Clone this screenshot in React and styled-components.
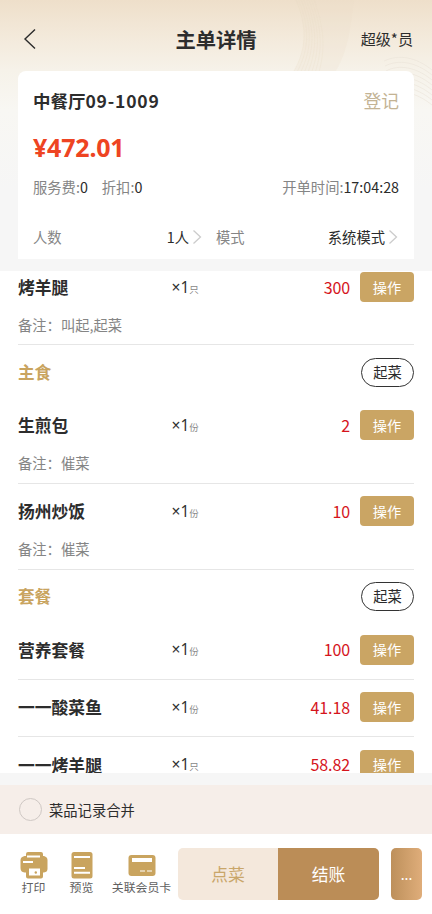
import React from "react";
import styled, { createGlobalStyle, css } from "styled-components";

const Global = createGlobalStyle`
  * { box-sizing: border-box; }
  body { margin: 0; background: #f6f6f6; }
  button { font-family: inherit; padding: 0; border: 0; cursor: pointer; }
`;

const Screen = styled.div`
  position: relative;
  width: 432px;
  height: 914px;
  overflow: hidden;
  display: flex;
  flex-direction: column;
  background: linear-gradient(180deg, #eedfca 0, #f3e9da 35px, #f6f2e9 70px, #f8f7f3 110px, #f6f6f6 190px);
  color: #2d2d2d;
  font-family: "Noto Sans CJK SC", "Noto Sans", sans-serif;
  white-space: nowrap;
`;

const Ripples = styled.svg`
  position: absolute;
  top: 0;
  right: 0;
`;

const Header = styled.header`
  position: relative;
  flex: none;
  height: 71px;
  padding: 6px 19px 0 23px;
  display: grid;
  grid-template-columns: 1fr auto 1fr;
  align-items: center;
  font-size: 15px;
`;

const Title = styled.h1`
  margin: 0 4px 0 0;
  font-size: 20.3px;
  line-height: 30px;
  font-weight: 700;
`;

const User = styled.span`
  justify-self: end;
  margin-top: -2px;
  font-size: 15.1px;
`;

const Card = styled.section`
  position: relative;
  flex: none;
  height: 188px;
  margin: 0 18px 12px;
  padding: 14px 15px 0;
  border-radius: 8px 8px 0 0;
  background: #fff;
`;

const CardRow = styled.div`
  display: flex;
  align-items: center;
  height: ${(p) => p.$h}px;
  font-size: 14.3px;
`;

const TableName = styled.strong`
  flex: 1;
  font-size: 17.5px;
  span { letter-spacing: 0.8px; }
`;

const Register = styled.span`
  color: #c3b394;
  font-size: 17.8px;
`;

const Total = styled.strong`
  color: #ee4422;
  font-family: "Noto Sans", "Noto Sans CJK SC", sans-serif;
  font-size: 25px;
  letter-spacing: -0.2px;
`;

const Field = styled.span`
  color: #858585;
  margin-right: ${(p) => p.$gap || 0}px;
  margin-left: ${(p) => (p.$end ? "auto" : 0)};
  b { font-weight: 400; color: #2b2b2b; }
`;

const Choice = styled.div`
  display: flex;
  align-items: center;
  width: ${(p) => p.$w}px;
  padding-right: ${(p) => p.$pad || 0}px;
  color: #858585;
  b { margin-left: auto; font-weight: 400; color: #2b2b2b; }
  svg { flex: none; margin: 0 1px 0 3px; }
`;

const List = styled.main`
  position: relative;
  flex: none;
  height: 502px;
  overflow: hidden;
  padding: 0 18px;
  background: #fff;
`;

const Scrolled = styled.div`
  margin-top: -11.4px;
`;

const Category = styled.div`
  display: flex;
  justify-content: space-between;
  align-items: center;
  height: 52.6px;
  padding-top: 1px;
  color: #c9a45f;
  font-size: 16.6px;
  font-weight: 700;
`;

const Pill = styled.button`
  width: 53px;
  height: 29px;
  border: 1.5px solid #333;
  border-radius: 15px;
  background: #fff;
  color: #2b2b2b;
  font-size: 14.3px;
  line-height: 26px;
`;

const Item = styled.article`
  height: ${(p) => (p.$note ? 85.8 : 57.6)}px;
  padding-top: 12.4px;
  border-bottom: 1px solid #e6e6e6;
`;

const ItemRow = styled.div`
  display: grid;
  grid-template-columns: 153.5px 1fr auto 54px;
  align-items: center;
  height: 30px;
`;

const Dish = styled.strong`
  font-size: 16.8px;
`;

const Count = styled.span`
  padding-top: 2px;
  font-family: "Noto Sans", "Noto Sans CJK SC", sans-serif;
  font-size: 15.6px;
  line-height: 24px;
  color: #333;
  small { font-size: 9.5px; color: #888; }
`;

const Price = styled.span`
  margin: -1px 10px 0 0;
  color: #d5141c;
  font-size: 16px;
  letter-spacing: -0.1px;
`;

const Action = styled.button`
  height: 30px;
  border-radius: 4px;
  background: #caa564;
  color: #fff;
  font-size: 14.2px;
  line-height: 29px;
`;

const Note = styled.p`
  margin: 12px 0 0;
  color: #858585;
  font-size: 14.3px;
  line-height: 21px;
`;

const MergeBar = styled.label`
  flex: none;
  display: flex;
  align-items: center;
  gap: 7px;
  height: 49px;
  margin-top: 12px;
  padding-left: 19px;
  background: #f6eee9;
  font-size: 14.3px;
`;

const Radio = styled.i`
  width: 23px;
  height: 23px;
  border: 1px solid #cfc8c4;
  border-radius: 50%;
`;

const Footer = styled.footer`
  flex: 1;
  display: flex;
  align-items: flex-start;
  padding: 14px 10px 0 15px;
  background: #fff;
`;

const Tool = styled.div`
  flex: none;
  display: flex;
  flex-direction: column;
  align-items: center;
  width: ${(p) => p.$w}px;
  padding-top: 3px;
  color: #606060;
  font-size: 11.9px;
  line-height: 15px;
  svg { display: block; }
`;

const BigButton = styled.button`
  flex: none;
  height: 52px;
  font-size: 16.8px;
  line-height: 51px;
  ${(p) =>
    p.$primary
      ? css`
          width: 101px;
          border-radius: 0 5px 5px 0;
          background: #bb8d57;
          color: #fff;
        `
      : css`
          width: 100px;
          margin-left: 6px;
          border-radius: 5px 0 0 5px;
          background: #f4e8dc;
          color: #c9a66a;
        `}
`;

const More = styled.button`
  flex: none;
  width: 31px;
  height: 52px;
  margin-left: 12px;
  border-radius: 5px;
  background: linear-gradient(90deg, #bd905b, #dfad7a);
  color: #fff;
  font-size: 14px;
`;

const Chevron = () => (
  <svg width="10" height="16" viewBox="0 0 10 16" fill="none" stroke="#ccc" strokeWidth="1.3">
    <path d="M1.5 1.5 8.5 8l-7 6.5" />
  </svg>
);

const PrintIcon = () => (
  <svg width="28" height="28" viewBox="0 0 28 28">
    <path fill="#c9a45f" d="M8 1h13q2 0 2 2v2h1q3.500 1 3.500 4v9q0 3-3.500 3.500h-1v4q0 2-2 2H8q-2 0-2-2v-4H4.500Q.5 21 .5 17V9q0-3 4-4H6V3q0-2 2-2Z" />
    <path d="M7 5.500h13M3 11h10" stroke="#fff" strokeWidth="2" />
    <path fill="#fff" d="M9 17.500h11v7H9z" />
    <circle cx="15.800" cy="21.500" r="1.200" fill="#c9a45f" />
  </svg>
);

const PreviewIcon = () => (
  <svg width="22" height="28" viewBox="0 0 22 28">
    <rect x="0.500" y="1" width="21" height="26.500" rx="2.500" fill="#c9a45f" />
    <path d="M3 6h16M3 17h11M3 21.800h16" stroke="#fff" strokeWidth="1.900" />
  </svg>
);

const CardIcon = () => (
  <svg width="28" height="28" viewBox="0 0 28 28">
    <rect x="0.500" y="4" width="27" height="21" rx="3" fill="#c9a45f" />
    <path d="M4 9h20" stroke="#fff" strokeWidth="4" />
    <path d="M12 20h5M19 20h5" stroke="#fff" strokeWidth="1.200" />
  </svg>
);

const rows = [
  { name: "烤羊腿", unit: "只", price: "300", note: "叫起,起菜" },
  { category: "主食" },
  { name: "生煎包", unit: "份", price: "2", note: "催菜" },
  { name: "扬州炒饭", unit: "份", price: "10", note: "催菜" },
  { category: "套餐" },
  { name: "营养套餐", unit: "份", price: "100" },
  { name: "一一酸菜鱼", unit: "份", price: "41.18" },
  { name: "一一烤羊腿", unit: "只", price: "58.82" },
];

const ripple = [0, 1, 2, 3, 4, 5, 6, 7];

export default function App() {
  return (
    <Screen>
      <Global />
      <Ripples width="140" height="140" viewBox="0 0 140 140" fill="none">
        <path d="M4 0C14 24 16 48 2 71H44C54 54 58 36 62 0Z" fill="#ecdcc6" opacity=".2" />
        {ripple.map((i) => (
          <path key={i} d={`M${4 + i * 2.6} 0C${14 + i * 2.4} 24 ${16 + i * 2.6} 46 ${2 + i * 3.6} 71`} stroke="#e8dac4" strokeWidth=".5" opacity=".5" />
        ))}
        {ripple.map((i) => (
          <path key={i} d={`M${92 + i} ${61 + i * 5}C107 ${54 + i * 5} 124 ${57 + i * 5} 140 ${70 + i * 5}`} stroke="#e9e3d8" strokeWidth=".7" opacity=".8" />
        ))}
      </Ripples>
      <Header>
        <svg width="14" height="22" viewBox="0 0 14 22" fill="none" stroke="#2b2b2b" strokeWidth="1.4">
          <path d="M12 1.500 2 11l10 9.500" />
        </svg>
        <Title>主单详情</Title>
        <User>超级*员</User>
      </Header>
      <Card>
        <CardRow $h={30}>
          <TableName>中餐厅<span>09-1009</span></TableName>
          <Register>登记</Register>
        </CardRow>
        <CardRow $h={63}>
          <Total>¥472.01</Total>
        </CardRow>
        <CardRow $h={16}>
          <Field $gap={14}>服务费:<b>0</b></Field>
          <Field>折扣:<b>0</b></Field>
          <Field $end>开单时间:<b>17:04:28</b></Field>
        </CardRow>
        <CardRow $h={85}>
          <Choice $w={183} $pad={13}>人数<b>1人</b><Chevron /></Choice>
          <Choice $w={183}>模式<b>系统模式</b><Chevron /></Choice>
        </CardRow>
      </Card>
      <List>
        <Scrolled>
          {rows.map((r) =>
            r.category ? (
              <Category key={r.category}>
                {r.category}
                <Pill>起菜</Pill>
              </Category>
            ) : (
              <Item key={r.name} $note={Boolean(r.note)}>
                <ItemRow>
                  <Dish>{r.name}</Dish>
                  <Count>×1<small>{r.unit}</small></Count>
                  <Price>{r.price}</Price>
                  <Action>操作</Action>
                </ItemRow>
                {r.note && <Note>备注：{r.note}</Note>}
              </Item>
            )
          )}
        </Scrolled>
      </List>
      <MergeBar>
        <Radio />
        菜品记录合并
      </MergeBar>
      <Footer>
        <Tool $w={37}><PrintIcon />打印</Tool>
        <Tool $w={59}><PreviewIcon />预览</Tool>
        <Tool $w={61}><CardIcon />关联会员卡</Tool>
        <BigButton>点菜</BigButton>
        <BigButton $primary>结账</BigButton>
        <More>...</More>
      </Footer>
    </Screen>
  );
}
